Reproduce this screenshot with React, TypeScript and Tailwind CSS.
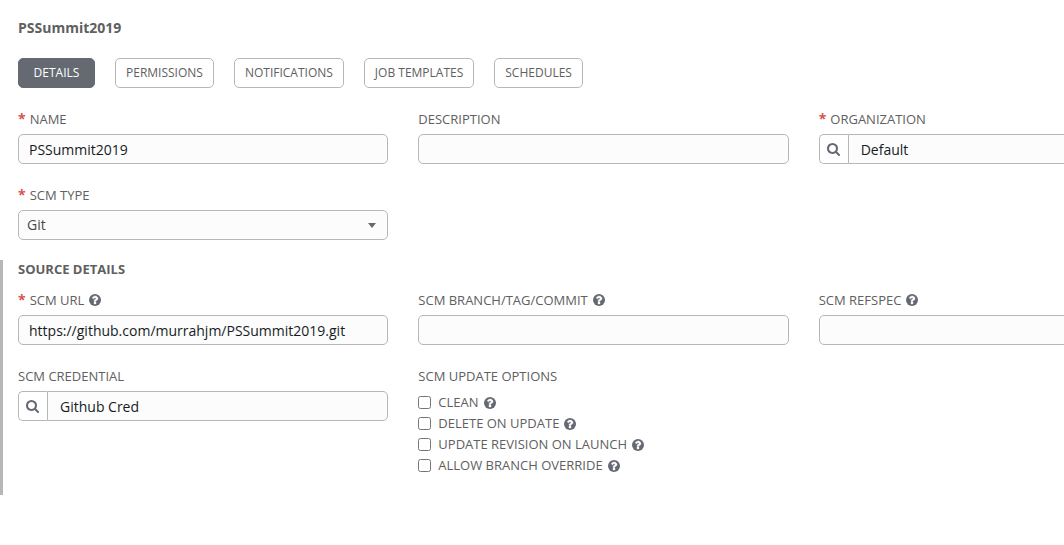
import React from 'react';
import clsx from 'clsx';

const tabs = ['Details', 'Permissions', 'Notifications', 'Job Templates', 'Schedules'];
const updateOptions = ['Clean', 'Delete on Update', 'Update Revision on Launch', 'Allow Branch Override'];

const inputStyles = 'h-[30px] border border-[#b7b7b7] bg-[#fcfcfc] text-sm';
// the form is wider than the visible panel, so the third column runs off the edge
const formGrid = 'grid grid-cols-3 gap-x-[30px] gap-y-[21px] w-[calc(100%+125px)]';

function SearchIcon() {
  return (
    <svg viewBox="0 128 1664 1664" className="size-[13px] fill-current" aria-hidden="true">
      <path d="M1152 832q0-185-131.5-316.5t-316.5-131.5-316.5 131.5-131.5 316.5 131.5 316.5 316.5 131.5 316.5-131.5 131.5-316.5zm512 832q0 52-38 90t-90 38q-54 0-90-38l-343-342q-179 124-399 124-143 0-273.5-55.5t-225-150-150-225-55.5-273.5 55.5-273.5 150-225 225-150 273.5-55.5 273.5 55.5 225 150 150 225 55.5 273.5q0 220-124 399l343 343q37 37 37 90z" />
    </svg>
  );
}

function HelpButton({ topic }: { topic: string }) {
  return (
    <button type="button" aria-label={`Help for ${topic}`} className="ml-[5px] text-[#646972]">
      <svg viewBox="128 128 1536 1536" className="size-3" aria-hidden="true">
        <circle cx="896" cy="896" r="768" className="fill-current" />
        <path
          className="fill-white stroke-white"
          strokeWidth="50"
          d="M1024 1376v-192q0-14-9-23t-23-9h-192q-14 0-23 9t-9 23v192q0 14 9 23t23 9h192q14 0 23-9t9-23zm256-672q0-88-55.5-163t-138.5-116-170-41q-243 0-371 213-15 24 8 42l132 100q7 6 19 6 16 0 25-12 53-68 86-92 34-24 86-24 48 0 85.5 26t37.5 59q0 38-20 61t-68 45q-63 28-115.5 86.5t-52.5 125.5v36q0 14 9 23t23 9h192q14 0 23-9t9-23q0-19 21.5-49.5t54.5-49.5q32-18 49-28.5t46-35 44.5-48 28-60.5 12.5-81z"
        />
      </svg>
    </button>
  );
}

interface FieldProps {
  id: string;
  label: string;
  required?: boolean;
  help?: boolean;
  children: React.ReactNode;
}

function Field({ id, label, required, help, children }: FieldProps) {
  return (
    <div>
      <div className="flex items-center h-5 mb-[5px]">
        <label htmlFor={id} className="text-[13px] leading-5 uppercase">
          {required && <span className="text-[#d9534f] text-sm leading-none font-bold mr-1">*</span>}
          {label}
        </label>
        {help && <HelpButton topic={label} />}
      </div>
      {children}
    </div>
  );
}

function TextInput({ id, value = '' }: { id: string; value?: string }) {
  return (
    <input
      id={id}
      type="text"
      defaultValue={value}
      className={clsx(inputStyles, 'block w-full rounded-[5px] px-2.5 text-[#161b1f]')}
    />
  );
}

function LookupInput({ id, value }: { id: string; value: string }) {
  return (
    <div className="flex">
      <button
        type="button"
        aria-label="Search"
        className="flex items-center w-[29px] pl-[7px] bg-white border border-r-0 border-[#b7b7b7] rounded-l-[5px] text-[#646972]"
      >
        <SearchIcon />
      </button>
      <input
        id={id}
        type="text"
        defaultValue={value}
        className={clsx(inputStyles, 'flex-1 min-w-0 rounded-r-[5px] px-3 text-[#161b1f]')}
      />
    </div>
  );
}

export default function App() {
  const [activeTab, setActiveTab] = React.useState('Details');

  return (
    <main className="min-h-screen overflow-hidden bg-white pt-[18px] font-['Open_Sans',sans-serif] text-[#606060]">
      <h1 className="pl-[18px] text-sm leading-5 font-bold">PSSummit2019</h1>

      <div className="flex gap-5 pl-[18px] mt-5 mb-[21px]">
        {tabs.map((tab) => (
          <button
            key={tab}
            type="button"
            onClick={() => setActiveTab(tab)}
            className={clsx(
              'h-[30px] min-w-[77px] px-2.5 border rounded-[5px] text-xs uppercase',
              tab === activeTab ? 'bg-[#646972] border-[#646972] text-white' : 'bg-white border-[#b7b7b7]'
            )}
          >
            {tab}
          </button>
        ))}
      </div>

      <form>
        <div className="pl-[18px]">
          <div className={formGrid}>
            <Field id="name" label="Name" required>
              <TextInput id="name" value="PSSummit2019" />
            </Field>
            <Field id="description" label="Description">
              <TextInput id="description" />
            </Field>
            <Field id="organization" label="Organization" required>
              <LookupInput id="organization" value="Default" />
            </Field>
            <Field id="scm-type" label="SCM Type" required>
              <div className="relative">
                <select
                  id="scm-type"
                  defaultValue="Git"
                  className={clsx(inputStyles, 'appearance-none block w-full rounded-[5px] px-2 text-[#484848]')}
                >
                  <option>Manual</option>
                  <option>Git</option>
                  <option>Mercurial</option>
                  <option>Subversion</option>
                </select>
                <svg
                  viewBox="0 0 8 5"
                  className="absolute right-3 top-[13px] w-2 h-[5px] fill-[#646972] pointer-events-none"
                  aria-hidden="true"
                >
                  <path d="M0 0h8L4 5z" />
                </svg>
              </div>
            </Field>
          </div>
        </div>

        <section className="mt-5 pl-[15px] pb-[19px] border-l-3 border-[#b7b7b7]">
          <h2 className="mb-3 text-[13px] leading-[18px] font-bold uppercase">Source Details</h2>
          <div className={formGrid}>
            <Field id="scm-url" label="SCM URL" required help>
              <TextInput id="scm-url" value="https://github.com/murrahjm/PSSummit2019.git" />
            </Field>
            <Field id="scm-branch" label="SCM Branch/Tag/Commit" help>
              <TextInput id="scm-branch" />
            </Field>
            <Field id="scm-refspec" label="SCM Refspec" help>
              <TextInput id="scm-refspec" />
            </Field>
            <Field id="scm-credential" label="SCM Credential">
              <LookupInput id="scm-credential" value="Github Cred" />
            </Field>
            <fieldset>
              <legend className="mb-1.5 text-[13px] leading-5 uppercase">SCM Update Options</legend>
              {updateOptions.map((option) => (
                <div key={option} className="flex items-center h-[21px]">
                  <label className="flex items-center gap-[7px] text-[13px] leading-[21px] uppercase">
                    <input type="checkbox" className="size-[13px]" />
                    {option}
                  </label>
                  <HelpButton topic={option} />
                </div>
              ))}
            </fieldset>
          </div>
        </section>
      </form>
    </main>
  );
}
